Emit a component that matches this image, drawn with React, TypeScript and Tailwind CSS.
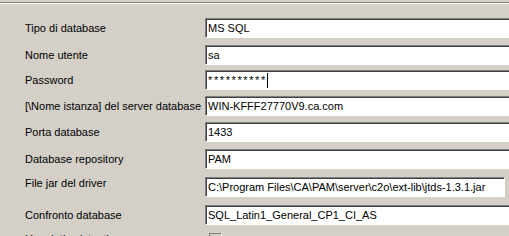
import React from "react";

type Row = {
  label: string;
  value: string;
  top: string; // margin above the field
  narrow?: boolean;
  labelUp?: boolean;
  caret?: boolean;
};

const rows: Row[] = [
  { label: "Tipo di database", value: "MS SQL", top: "mt-[14px]" },
  { label: "Nome utente", value: "sa", top: "mt-[7px]" },
  { label: "Password", value: "**********", top: "mt-[5px]", caret: true },
  { label: "[\\Nome istanza] del server database", value: "WIN-KFFF27770V9.ca.com", top: "mt-[6px]" },
  { label: "Porta database", value: "1433", top: "mt-[6px]" },
  { label: "Database repository", value: "PAM", top: "mt-[7px]" },
  {
    label: "File jar del driver",
    value: "C:\\Program Files\\CA\\PAM\\server\\c2o\\ext-lib\\jtds-1.3.1.jar",
    top: "mt-[8px]",
    narrow: true,
    labelUp: true,
  },
  { label: "Confronto database", value: "SQL_Latin1_General_CP1_CI_AS", top: "mt-[8px]" },
];

function Field({ row }: { row: Row }) {
  return (
    <div
      className={`h-[20px] shrink-0 bg-white border-t border-l border-t-[#808080] border-l-[#808080] border-b border-r border-b-white border-r-[#ffffff] shadow-[inset_1px_1px_0_#404040] flex items-center pl-[2px] ${
        row.narrow ? "w-[300px]" : "w-[330px]"
      }`}
    >
      <span className={`whitespace-nowrap ${row.caret ? "tracking-[1.6px]" : ""}`}>{row.value}</span>
      {row.caret && <span className="w-[1px] h-[15px] bg-black" />}
    </div>
  );
}

export default function App() {
  return (
    <div
      className="w-[509px] h-[236px] overflow-hidden bg-[#d4d0c8] text-black text-[11px] tracking-[0px]"
      style={{ fontFamily: '"Liberation Sans", Arial, sans-serif' }}
    >
      {/* separator line at top */}
      <div className="mt-[2px] h-[1px] bg-[#808080]" />
      <div className="h-[1px] bg-white" />

      {rows.map((row) => (
        <div key={row.label} className={`flex ${row.labelUp ? "items-start" : "items-center"} ${row.top}`}>
          <div className={`w-[205px] shrink-0 pl-[25px] whitespace-nowrap ${row.labelUp ? "-mt-[2px]" : ""}`}>
            {row.label}
          </div>
          <Field row={row} />
        </div>
      ))}

      {/* last row, cut by the window edge */}
      <div className="flex items-center mt-[6px]">
        <div className="w-[205px] shrink-0 pl-[25px] whitespace-nowrap">Usa dati esistenti</div>
        <div className="ml-[4px] w-[13px] h-[13px] bg-[#d4d0c8] border border-t-[#808080] border-l-[#808080] border-b-white border-r-white" />
      </div>
    </div>
  );
}
